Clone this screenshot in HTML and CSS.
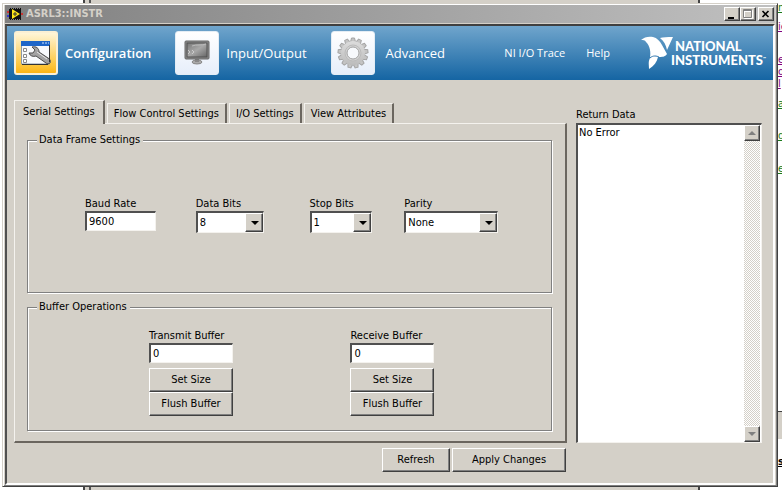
FILE: index.html
```html
<!DOCTYPE html>
<html lang="en">
<head>
    <meta charset="UTF-8">
    <meta name="viewport" content="width=device-width, initial-scale=1.0">
    <title>ASRL3::INSTR</title>
    <link rel="stylesheet" href="styles.css">
</head>
<body>
    <!-- page behind the window -->
    <div class="behind">
        <div class="behind-left"></div>
        <div class="behind-mid"></div>
        <div class="behind-right">
            <a class="frag f1" href="#">m</a>
            <a class="frag purple f2" href="#">ie</a>
            <a class="frag purple f3" href="#">e</a>
            <a class="frag purple f4" href="#">or</a>
            <a class="frag purple f5" href="#">l</a>
            <a class="frag f6" href="#">a</a>
            <a class="frag f7" href="#">d</a>
            <a class="frag f8" href="#">e</a>
            <div class="behind-bar"></div>
            <b class="frag black f9">s</b>
        </div>
    </div>

    <div class="window">
        <div class="titlebar">
            <svg class="app-icon" width="16" height="14" viewBox="0 0 16 14">
                <path d="M0 9h3" stroke="#3a3acc" stroke-width="2"/>
                <path d="M0 5h3M13 7h3" stroke="#c33" stroke-width="2"/>
                <rect x="2" y="2" width="12" height="10" fill="#111"/>
                <path d="M3 1.500h11M3 12.500h11" stroke="#111" stroke-dasharray="1 1"/>
                <path d="M5 2v10l8-5z" fill="#ffe81a"/>
                <path d="M6 7h4M8 5v4" stroke="#333"/>
            </svg>
            <span class="title">ASRL3::INSTR</span>
            <div class="win-btns">
                <button class="win-btn" aria-label="Minimize">
                    <svg width="12" height="11" viewBox="0 0 12 11"><path d="M2 8h6v2H2z" fill="#000"/></svg>
                </button>
                <button class="win-btn" aria-label="Maximize" disabled>
                    <svg width="12" height="11" viewBox="0 0 12 11"><path d="M2.5 1.5h8v8h-8zM2 2.5h9" fill="none" stroke="#fff"/><path d="M1.5 .5h8v8h-8zM1 1.5h9" fill="none" stroke="#808080"/></svg>
                </button>
                <button class="win-btn close" aria-label="Close">
                    <svg width="12" height="11" viewBox="0 0 12 11"><path d="M2.500 2l6 6M8.500 2l-6 6" stroke="#000" stroke-width="1.600"/></svg>
                </button>
            </div>
        </div>

        <div class="client">
            <div class="header">
                <button class="nav current">
                    <span class="tile">
                        <svg width="32" height="26" viewBox="0 0 32 26">
                            <path d="M1.500 2h28v22h-28z" fill="#f8fafc" stroke="#8a98a8"/>
                            <path d="M1 1h29v5H1z" fill="#1e66c8"/>
                            <path d="M22 3h2M25 3h2M28 3h1" stroke="#cfe4ff"/>
                            <path d="M3.500 8.500h3v3h-3zM3.500 14.500h3v3h-3zM3.500 19.500h3v3h-3z" fill="#fff" stroke="#888"/>
                            <path d="M12 7c4-1 7 1 7 5l9 6c2 1 3 3 2 5-1 1-3 1-4 0l-10-7c-3 1-6 0-7-3l4 0 2-3z" fill="#a2a2a2" stroke="#4e4e4e"/>
                            <path d="M17 12l10 7" stroke="#e6e6e6"/>
                            <path d="M29.500 5v17M2 24.500h26" stroke="#333"/>
                        </svg>
                    </span>
                    <span>Configuration</span>
                </button>
                <button class="nav">
                    <span class="tile">
                        <svg width="28" height="26" viewBox="0 0 28 26">
                            <defs>
                                <linearGradient id="screen" x1="0" y1="0" x2="1" y2="1">
                                    <stop offset="0" stop-color="#777"/>
                                    <stop offset=".5" stop-color="#a8a8a8"/>
                                    <stop offset="1" stop-color="#666"/>
                                </linearGradient>
                            </defs>
                            <ellipse cx="14" cy="22" rx="5" ry="2" fill="#aaa" stroke="#888"/>
                            <path d="M12 18h4v4h-4z" fill="#888"/>
                            <rect x="2" y="1" width="24" height="18" rx="1" fill="#8c8c8c" stroke="#666"/>
                            <rect x="4" y="3" width="20" height="14" fill="url(#screen)" stroke="#505050"/>
                            <path d="M5 10l2 2-2 2M9 10l2 2-2 2" fill="none" stroke="#ccc"/>
                            <path d="M9 6c5-2 9 0 14-2" fill="none" stroke="#bbb"/>
                        </svg>
                    </span>
                    <span>Input/Output</span>
                </button>
                <button class="nav wide">
                    <span class="tile">
                        <svg width="34" height="34" viewBox="0 0 34 34">
                            <defs>
                                <linearGradient id="metal" x1="0" y1="0" x2="0" y2="1">
                                    <stop offset="0" stop-color="#dcdcdc"/>
                                    <stop offset="1" stop-color="#bcbcbc"/>
                                </linearGradient>
                            </defs>
                            <g fill="#c4c4c4" stroke="#a4a4a4">
                                <path id="tooth" d="M14.500 6l1-4h3l1 4z"/>
                                <use href="#tooth" transform="rotate(27.700 17 17)"/>
                                <use href="#tooth" transform="rotate(55.400 17 17)"/>
                                <use href="#tooth" transform="rotate(83.100 17 17)"/>
                                <use href="#tooth" transform="rotate(110.800 17 17)"/>
                                <use href="#tooth" transform="rotate(138.500 17 17)"/>
                                <use href="#tooth" transform="rotate(166.200 17 17)"/>
                                <use href="#tooth" transform="rotate(193.800 17 17)"/>
                                <use href="#tooth" transform="rotate(221.500 17 17)"/>
                                <use href="#tooth" transform="rotate(249.200 17 17)"/>
                                <use href="#tooth" transform="rotate(276.900 17 17)"/>
                                <use href="#tooth" transform="rotate(304.600 17 17)"/>
                                <use href="#tooth" transform="rotate(332.300 17 17)"/>
                            </g>
                            <circle cx="17" cy="17" r="12" fill="url(#metal)"/>
                            <circle cx="17" cy="17" r="8" fill="#d2d2d2" stroke="#bbb"/>
                            <circle cx="17" cy="17" r="6" fill="#f7f9fc" stroke="#a4a4a4"/>
                        </svg>
                    </span>
                    <span>Advanced</span>
                </button>
                <div class="links">
                    <a href="#">NI I/O Trace</a>
                    <a href="#">Help</a>
                </div>
                <div class="logo">
                    <svg width="34" height="34" viewBox="0 0 34 34" fill="#fff">
                        <path d="M0 4C3 1 8 0 12 1c4 1 7 4 9 8l5 9c-2 3-5 3-9 3-1 5-4 9-9 12 0-5-1-7 1-11 1-6 0-12-4-16C4 4 2 4 0 4z"/>
                        <path d="M19 2c3-1 7-1 13-1l-6 13c-1-5-3-9-7-12z"/>
                        <path d="M9 22c3-3 7-2 9-1" fill="none" stroke="#2f77af"/>
                    </svg>
                    <div class="logo-text">
                        <div class="l1">NATIONAL</div>
                        <div>INSTRUMENTS<sup>™</sup></div>
                    </div>
                </div>
            </div>

            <div class="content">
                <div class="left">
                    <div class="tabs" role="tablist">
                        <button class="tab active" role="tab" aria-selected="true">Serial Settings</button>
                        <button class="tab" role="tab">Flow Control Settings</button>
                        <button class="tab" role="tab">I/O Settings</button>
                        <button class="tab" role="tab">View Attributes</button>
                    </div>
                    <div class="panel">
                        <fieldset class="group frame">
                            <legend>Data Frame Settings</legend>
                            <div class="frame-fields">
                                <div class="field">
                                    <label for="baud">Baud Rate</label>
                                    <input class="baud" id="baud" type="text" value="9600">
                                </div>
                                <div class="field">
                                    <label for="databits">Data Bits</label>
                                    <span class="combo w68"><select id="databits"><option>8</option><option>7</option></select></span>
                                </div>
                                <div class="field">
                                    <label for="stopbits">Stop Bits</label>
                                    <span class="combo w62"><select id="stopbits"><option>1</option><option>2</option></select></span>
                                </div>
                                <div class="field">
                                    <label for="parity">Parity</label>
                                    <span class="combo w94"><select id="parity"><option>None</option><option>Odd</option><option>Even</option></select></span>
                                </div>
                            </div>
                        </fieldset>
                        <fieldset class="group">
                            <legend>Buffer Operations</legend>
                            <div class="buffers">
                                <div class="buffer">
                                    <label for="tx">Transmit Buffer</label>
                                    <input id="tx" type="text" value="0">
                                    <button class="btn">Set Size</button>
                                    <button class="btn">Flush Buffer</button>
                                </div>
                                <div class="buffer">
                                    <label for="rx">Receive Buffer</label>
                                    <input id="rx" type="text" value="0">
                                    <button class="btn">Set Size</button>
                                    <button class="btn">Flush Buffer</button>
                                </div>
                            </div>
                        </fieldset>
                    </div>
                    <div class="actions">
                        <button class="btn refresh">Refresh</button>
                        <button class="btn apply">Apply Changes</button>
                    </div>
                </div>
                <div class="right">
                    <label for="return">Return Data</label>
                    <div class="output">
                        <textarea id="return" readonly>No Error</textarea>
                        <div class="scroll">
                            <button class="arrow" aria-label="Scroll up">
                                <svg width="8" height="4" viewBox="0 0 8 4"><path d="M4 0l4 4H0z" fill="#808080"/></svg>
                            </button>
                            <button class="arrow" aria-label="Scroll down">
                                <svg width="8" height="4" viewBox="0 0 8 4"><path d="M0 0h8L4 4z" fill="#808080"/></svg>
                            </button>
                        </div>
                    </div>
                </div>
            </div>
        </div>
    </div>
</body>
</html>
```
FILE: styles.css
```css
*{
    box-sizing: border-box;
    padding: 0;
    margin: 0;
}
body{
    min-height: 100vh;
    padding: 3px 4px 3px 2px;
    display: flex;
    background-color: #fff;
    font: 11px/14px "DejaVu Sans Condensed", "DejaVu Sans", sans-serif;
    color: #000;
}
button,input,select,textarea{
    font: inherit;
    color: inherit;
    border-radius: 0;
    outline: none;
}

/* page behind */
.behind{
    position: absolute;
    top: 0;
    left: 0;
    right: 0;
    bottom: 0;
    display: flex;
    overflow: hidden;
}
.behind-left{
    width: 83px;
}
.behind-mid{
    flex: 1;
    background-color: #d4d0c8;
    border-left: 2px solid #444;
    box-shadow: inset 4px 0 #d4d0c8, inset 6px 0 #555;
    border-right: 2px solid #444;
}
.behind-right{
    width: 82px;
    position: relative;
}
.frag{
    position: absolute;
    left: 78px;
    font-size: 11px;
    line-height: 14px;
    color: #1a7a1a;
}
.purple{
    color: #800080;
}
.black{
    color: #000;
    text-decoration: underline;
}
.f1{ top: 1px; }
.f2{ top: 20px; }
.f3{ top: 53px; }
.f4{ top: 65px; }
.f5{ top: 77px; }
.f6{ top: 97px; }
.f7{ top: 129px; }
.f8{ top: 162px; }
.f9{ top: 455px; }
.behind-bar{
    position: absolute;
    top: 411px;
    right: 0;
    width: 5px;
    height: 28px;
    background-color: #d4d0c8;
    border-top: 1px solid #404040;
}

/* window */
.window{
    flex: 1;
    position: relative;
    display: flex;
    flex-direction: column;
    padding: 1px 2px 1px 2px;
    background-color: #d4d0c8;
    border: 1px solid #d4d0c8;
    border-right-color: #404040;
    border-bottom-color: #404040;
    box-shadow: inset 1px 1px #fff, inset -1px -1px #808080;
}
.titlebar{
    height: 18px;
    margin-bottom: 1px;
    padding: 0 1px 0 2px;
    display: flex;
    align-items: center;
    background: linear-gradient(to right, #808080, #c0c0c0);
}
.title{
    margin-left: 3px;
    flex: 1;
    font-weight: bold;
    color: #d4d0c8;
}
.win-btns{
    display: flex;
}
.win-btn{
    width: 16px;
    height: 14px;
    display: flex;
    align-items: center;
    justify-content: center;
}
.win-btn,.btn,.arrow{
    background-color: #d4d0c8;
    border: 1px solid #fff;
    border-right-color: #404040;
    border-bottom-color: #404040;
    box-shadow: inset -1px -1px #808080;
}
.close{
    margin-left: 2px;
}
.client{
    flex: 1;
    display: flex;
    flex-direction: column;
    border-top: 2px solid #404040;
    border-left: 2px solid #505050;
    border-right: 2px solid #fff;
    border-bottom: 2px solid #fff;
}

/* blue header */
.header{
    height: 54px;
    padding: 0 7px;
    display: flex;
    align-items: center;
    background: linear-gradient(to bottom, #70a5cc, #1565a3);
    font-family: "Open Sans", "Noto Sans", sans-serif;
    color: #fff;
}
.nav{
    display: flex;
    align-items: center;
    gap: 7px;
    margin-right: 24px;
    border: none;
    background: none;
    font-size: 13px;
    line-height: 18px;
    white-space: nowrap;
}
.nav.current{
    font-weight: 600;
}
.nav.wide{
    gap: 11px;
    margin-right: 0;
}
.tile{
    width: 44px;
    height: 44px;
    display: flex;
    align-items: center;
    justify-content: center;
    border: 1px solid #e4edf5;
    border-radius: 3px;
    background: linear-gradient(to bottom, #fff, #e6eefa);
}
.current .tile{
    border: 2px solid #fbf0d4;
    background: linear-gradient(to bottom, #fff6d8, #fdc63c 80%, #fdb515);
}
.links{
    margin-left: auto;
    margin-right: 31px;
    display: flex;
    gap: 21px;
    font-size: 11px;
    line-height: 16px;
    white-space: nowrap;
}
.links a{
    color: #fff;
    text-decoration: none;
}
.logo{
    display: flex;
    align-items: center;
}
.logo svg{
    flex: none;
}
.logo-text{
    margin-left: -4px;
    font-family: Lato, "Open Sans", sans-serif;
    font-weight: 900;
    font-size: 13px;
    line-height: 14px;
}
.logo-text .l1{
    padding-left: 4px;
}
.logo sup{
    font-size: 4px;
    line-height: 4px;
}

/* content */
.content{
    flex: 1;
    display: grid;
    grid-template-columns: 1fr 186px;
    gap: 9px;
    padding: 20px 11px 11px 7px;
}
.left{
    display: flex;
    flex-direction: column;
}
.tabs{
    display: flex;
    align-items: flex-end;
    gap: 2px;
}
.tab{
    height: 20px;
    padding: 0 6px;
    background-color: #d4d0c8;
    border: none;
    border-top: 1px solid #f4f2ee;
    border-left: 1px solid #f4f2ee;
    border-right: 2px solid #6b665f;
    white-space: nowrap;
}
.tab.active{
    height: 24px;
    margin-bottom: -1px;
    padding: 0 8px 2px 8px;
    position: relative;
}
.panel{
    flex: 1;
    display: flex;
    flex-direction: column;
    gap: 7px;
    padding: 9px 13px 10px 12px;
    border: 1px solid #f4f2ee;
    border-right: 2px solid #6b665f;
    border-bottom: 2px solid #6b665f;
}
.group{
    border: 1px solid #808080;
    box-shadow: 1px 1px #fff, inset 1px 1px #fff;
}
.group legend{
    margin-left: 9px;
    padding: 0 3px 0 2px;
    background-color: #d4d0c8;
}
.frame{
    flex: 1;
}
.frame-fields{
    display: grid;
    grid-template-columns: 111fr 114fr 95fr 147fr;
    padding: 50px 0 0 57px;
}
.field,.buffer{
    display: flex;
    flex-direction: column;
    align-items: flex-start;
}
input,.combo,.output{
    background-color: #fff;
    border: 2px solid #505050;
    border-right: 1px solid #f4f2ee;
    border-bottom: 1px solid #f4f2ee;
}
input{
    height: 20px;
    padding: 0 2px;
}
.baud{
    width: 71px;
}
.combo{
    display: block;
    position: relative;
    height: 22px;
    border-width: 2px 1px 1px 2px;
}
.combo select{
    width: 100%;
    height: 100%;
    padding: 0 18px 0 2px;
    appearance: none;
    border: none;
    background: none;
}
.combo::before{
    content: "";
    position: absolute;
    top: 0;
    right: 0;
    bottom: 0;
    width: 16px;
    background-color: #d4d0c8;
    border: 1px solid #fff;
    border-right-color: #404040;
    border-bottom-color: #404040;
    box-shadow: inset -1px -1px #808080;
    pointer-events: none;
}
.combo::after{
    content: "";
    position: absolute;
    top: 8px;
    right: 4px;
    border: 4px solid transparent;
    border-top-color: #000;
    border-bottom: none;
    pointer-events: none;
}
.w68{ width: 68px; }
.w62{ width: 62px; }
.w94{ width: 94px; }

.buffers{
    display: grid;
    grid-template-columns: 202fr 201fr;
    padding: 15px 0 14px 121px;
}
.buffer input,.buffer .btn{
    width: 84px;
}
.buffer input{
    margin-bottom: 5px;
}
.btn{
    height: 24px;
}
.actions{
    display: flex;
    justify-content: flex-end;
    gap: 2px;
    padding: 5px 1px 0 0;
}
.refresh{
    width: 68px;
}
.apply{
    width: 114px;
}

.right{
    display: flex;
    flex-direction: column;
    padding: 8px 0 29px;
}
.output{
    flex: 1;
    display: flex;
    margin-top: 1px;
    padding-right: 1px;
}
.output textarea{
    flex: 1;
    min-width: 0;
    padding: 1px;
    border: none;
    resize: none;
}
.scroll{
    width: 16px;
    display: flex;
    flex-direction: column;
    justify-content: space-between;
    background: repeating-conic-gradient(#d4d0c8 0 25%, #fff 0 50%) 0 0 / 2px 2px;
}
.arrow{
    height: 16px;
    display: flex;
    align-items: center;
    justify-content: center;
}
```
